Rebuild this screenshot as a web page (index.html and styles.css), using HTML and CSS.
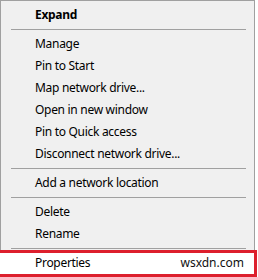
FILE: index.html
```html
<!DOCTYPE html>
<html>
<head>
<meta charset="utf-8">
<link rel="stylesheet" href="styles.css">
</head>
<body>
<div class="menu">
  <div class="item bold">Expand</div>
  <div class="sep"></div>
  <div class="item">Manage</div>
  <div class="item">Pin to Start</div>
  <div class="item">Map network drive...</div>
  <div class="item">Open in new window</div>
  <div class="item">Pin to Quick access</div>
  <div class="item">Disconnect network drive...</div>
  <div class="sep"></div>
  <div class="item">Add a network location</div>
  <div class="sep"></div>
  <div class="item">Delete</div>
  <div class="item">Rename</div>
  <div class="sep"></div>
  <div class="item marked"><span class="label">Properties</span><span class="mark">wsxdn.com</span></div>
</div>
</body>
</html>
```
FILE: styles.css
```css
html, body {
  margin: 0;
  padding: 0;
  background: #ffffff;
  overflow: hidden;
}
body {
  width: 258px;
  height: 277px;
  font-family: "Noto Sans", "Open Sans", sans-serif;
  font-size: 12px;
  letter-spacing: -0.3px;
  color: #000;
}
.menu {
  width: 253px;
  background: #f0f0f0;
  border: 1px solid #a0a0a0;
  border-bottom: none;
  padding: 3px 0 3px 0;
}
.item {
  height: 22px;
  line-height: 22px;
  padding-left: 34px;
  white-space: nowrap;
}
.bold {
  font-weight: bold;
}
.sep {
  height: 1px;
  background: #a0a0a0;
  margin: 3px 8px 3px 10px;
}
.marked {
  position: relative;
  display: flex;
  justify-content: space-between;
  padding-right: 10px;
}
.marked::before {
  content: "";
  position: absolute;
  top: -2px;
  left: -32px;
  right: -3px;
  bottom: -3px;
  border: 3px solid #dd1f2d;
  background: #ffffff;
}
.label, .mark {
  position: relative;
}
.mark {
  color: #111;
  letter-spacing: 0;
}
```
